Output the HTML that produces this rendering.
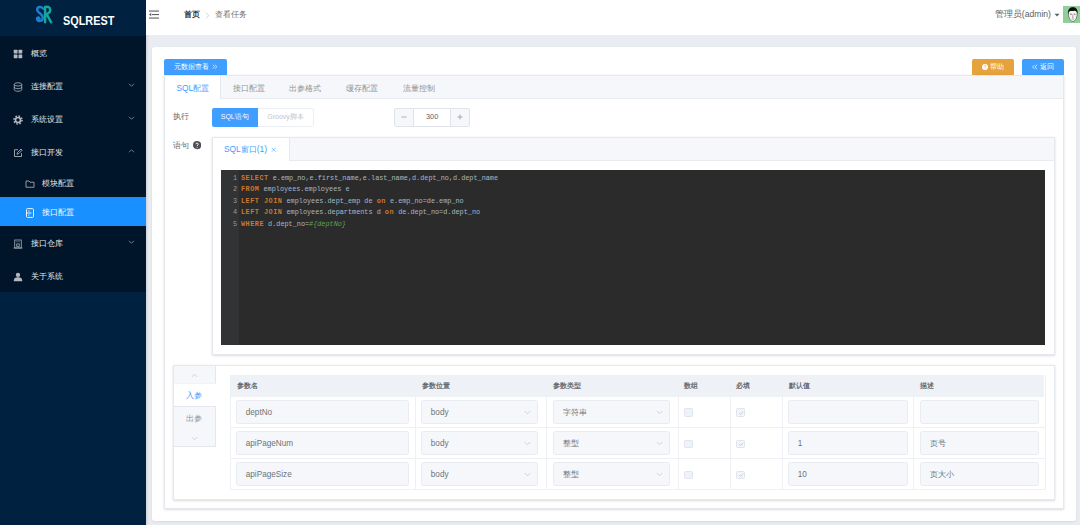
<!DOCTYPE html>
<html lang="zh">
<head>
<meta charset="utf-8">
<title>SQLREST</title>
<style>
*{box-sizing:border-box;margin:0;padding:0}
html,body{width:1080px;height:525px;overflow:hidden;background:#e9ecf0;font-family:"Liberation Sans",sans-serif;}
body{position:relative;font-size:8px;color:#606266}
.abs{position:absolute}
.t{position:absolute;white-space:nowrap;line-height:1}
/* sidebar */
#side{position:absolute;left:0;top:0;width:146px;height:525px;background:#002140;box-shadow:1px 0 2.5px rgba(0,21,41,.14);z-index:5}
#logo{position:absolute;left:0;top:0;width:146px;height:36px;background:#002140}
#menu{position:absolute;left:0;top:36px;width:146px;height:256px;background:#001529}
.mi{position:absolute;left:0;width:146px;height:33px;color:#e6e9ec;font-size:8.2px}
.mi .lbl{position:absolute;left:30.5px;top:50%;margin-top:-3.5px;line-height:9px;white-space:nowrap}
.mi svg.ic{position:absolute;left:12.8px;top:50%;margin-top:-4px;width:10px;height:10px}
.mi svg.ch{position:absolute;left:127.5px;top:50%;margin-top:-3.5px;width:7px;height:6px}
.mi.sub .lbl{left:42px}
.mi.sub svg.ic{left:25px}
.mi.on{background:#1890ff;color:#fff}
/* header */
#head{position:absolute;left:146px;top:0;width:934px;height:35px;background:#fff;z-index:6}
/* card */
#card{position:absolute;left:152px;top:47px;width:924px;height:474px;background:#fff;border-radius:3px;box-shadow:0 1px 2.5px rgba(0,0,0,.08)}
.btn{position:absolute;height:16.5px;border-radius:2px;color:#fff;font-size:7.1px;line-height:17.5px;text-align:center;white-space:nowrap}

/* main content */
.box{position:absolute;background:#fff;border:1px solid #e5e8ed;box-shadow:0 1px 2px 0 rgba(0,0,0,.12),0 0 3px 0 rgba(0,0,0,.04)}
.thead{position:absolute;left:0;top:0;right:0;background:#f5f7fa;border-bottom:1px solid #e8ebf0}
.tab{position:absolute;top:1px;font-size:8.2px;color:#909399;white-space:nowrap;line-height:22px}
.tabon{position:absolute;top:-1px;background:#fff;border:1px solid #e5e8ed;border-bottom:0;color:#409eff}
.ob .tab{margin-top:1px}
.lab{position:absolute;font-size:8px;color:#606266;white-space:nowrap;line-height:10px}
.code{position:absolute;left:221px;top:169.5px;width:824.3px;height:175.5px;background:#2b2b2b;font-family:"Liberation Mono",monospace;font-size:6.84px;color:#a9b7c6;overflow:hidden}
.code .gut{position:absolute;left:0;top:0;width:17.5px;height:100%;background:#313335}
.code .ln{position:absolute;left:0;width:16px;text-align:right;color:#999;line-height:11.5px;height:11.5px}
.code .cl{position:absolute;left:20px;white-space:pre;line-height:11.5px;height:11.5px}
.code b{color:#cc7832;font-weight:bold;letter-spacing:.5px}
.code i{color:#61a151;font-style:italic}

/* params */
.th{position:absolute;top:375px;height:21.75px;line-height:21.75px;font-size:7px;font-weight:bold;color:#666a72;white-space:nowrap}
.inp{position:absolute;height:23.5px;background:#f5f7fa;border:1px solid #e8ebf0;border-radius:2.5px;font-size:8.2px;color:#707378;line-height:23.5px;padding-left:8.5px;white-space:nowrap;overflow:hidden}
.inp svg{position:absolute;right:6px;top:8.5px;width:7px;height:5px}
.hl{position:absolute;left:230.5px;width:814.5px;height:1px;background:#eef0f5}
.vl{position:absolute;top:375px;width:1px;height:114.5px;background:#eef0f5}
.cb{position:absolute;width:8.7px;height:8.7px;border:1px solid #e1e4ea;border-radius:1.5px;background:#edf2fc}
.cb svg{position:absolute;left:0.3px;top:0.3px;width:6.1px;height:6.1px}
</style>
</head>
<body>
<!-- ===== SIDEBAR ===== -->
<div id="side">
  <div id="logo">
    <svg class="abs" style="left:35.4px;top:5.3px;width:18.3px;height:19.2px" viewBox="0 0 38 41">
      <path d="M17 8 C15 3 4 2 4 10 C4 18 17 18 16 28 C15.5 35 6 36 4 31 C2.5 27 8 25 9 29" fill="none" stroke="#1e7fd0" stroke-width="5.2" stroke-linecap="round"/>
      <path d="M21 37 L21 4 C34 1 36 16 24 19 L34 37" fill="none" stroke="#12a89a" stroke-width="5.2" stroke-linejoin="round" stroke-linecap="round"/>
      <path d="M21 28 C23 20 28 17 31 15" fill="none" stroke="#12a89a" stroke-width="2.2" stroke-linecap="round"/>
    </svg>
    <div class="t" style="left:62.5px;top:15.1px;font-size:12px;font-weight:bold;color:#fff;transform-origin:0 0;transform:scaleX(.905)">SQLREST</div>
  </div>
  <div id="menu">
    <div class="mi " style="top:0px;height:33px"><svg class="ic" viewBox="0 0 20 20"><g fill="#b4b9c1"><rect x="1.5" y="1.5" width="7.5" height="7.5" rx="1"/><rect x="11" y="1.5" width="7.5" height="7.5" rx="1"/><rect x="1.5" y="11" width="7.5" height="7.5" rx="1"/><rect x="11" y="11" width="7.5" height="7.5" rx="1"/></g></svg><span class="lbl">概览</span></div>
    <div class="mi " style="top:33px;height:33px"><svg class="ic" viewBox="0 0 20 20"><g fill="none" stroke="#b4b9c1" stroke-width="1.6"><ellipse cx="10" cy="4.8" rx="7.5" ry="3.3"/><path d="M2.5 4.8 V15.2 C2.5 19.6 17.5 19.6 17.5 15.2 V4.8"/><path d="M2.5 10 C2.5 14.4 17.5 14.4 17.5 10"/></g></svg><span class="lbl">连接配置</span><svg class="ch" viewBox="0 0 14 12"><path d="M2 3.5 L7 8.5 L12 3.5" fill="none" stroke="#8b95a3" stroke-width="1.6"/></svg></div>
    <div class="mi " style="top:66px;height:33px"><svg class="ic" viewBox="0 0 20 20"><g fill="none" stroke="#b4b9c1"><circle cx="10" cy="10" r="5" stroke-width="3.2"/><circle cx="10" cy="10" r="8" stroke-width="3" stroke-dasharray="3.2 3.08"/></g></svg><span class="lbl">系统设置</span><svg class="ch" viewBox="0 0 14 12"><path d="M2 3.5 L7 8.5 L12 3.5" fill="none" stroke="#8b95a3" stroke-width="1.6"/></svg></div>
    <div class="mi " style="top:99px;height:33px"><svg class="ic" viewBox="0 0 20 20"><g fill="none" stroke="#b4b9c1" stroke-width="1.7"><path d="M17 10.5 V17 H3 V3.5 H10"/><path d="M8 12.5 L9 9 L16 2 L18.3 4.3 L11.3 11.3 Z"/></g></svg><span class="lbl">接口开发</span><svg class="ch" viewBox="0 0 14 12"><path d="M2 8.5 L7 3.5 L12 8.5" fill="none" stroke="#8b95a3" stroke-width="1.6"/></svg></div>
    <div class="mi sub" style="top:132px;height:29.3px"><svg class="ic" viewBox="0 0 20 20"><path d="M2 4 H8 L10 6.5 H18 V16.5 H2 Z" fill="none" stroke="#b4b9c1" stroke-width="1.6" stroke-linejoin="round"/></svg><span class="lbl">模块配置</span></div>
    <div class="mi sub on" style="top:161.3px;height:28.7px"><svg class="ic" viewBox="0 0 20 20"><g fill="none" stroke="#fff" stroke-width="1.8"><rect x="3" y="1.2" width="14" height="17.6" rx="2"/><path d="M3 10 H13"/><path d="M6.5 6 H9"/><path d="M6.5 14 H9"/></g></svg><span class="lbl">接口配置</span></div>
    <div class="mi " style="top:190px;height:33px"><svg class="ic" viewBox="0 0 20 20"><g fill="none" stroke="#b4b9c1" stroke-width="1.5"><rect x="3.5" y="2" width="13" height="16"/><path d="M1 18 H19"/><rect x="7.5" y="10" width="5" height="5"/><path d="M7 5.5 H9 M11 5.5 H13"/></g></svg><span class="lbl">接口仓库</span><svg class="ch" viewBox="0 0 14 12"><path d="M2 3.5 L7 8.5 L12 3.5" fill="none" stroke="#8b95a3" stroke-width="1.6"/></svg></div>
    <div class="mi " style="top:223px;height:33px"><svg class="ic" viewBox="0 0 20 20"><g fill="#b4b9c1"><circle cx="10" cy="5.8" r="4.3"/><path d="M1.5 18.5 C1.5 12 5 10.5 10 10.5 C15 10.5 18.5 12 18.5 18.5 Z"/></g></svg><span class="lbl">关于系统</span></div>
  </div>
</div>
<!-- ===== HEADER ===== -->
<div id="head">
  <svg class="abs" style="left:3px;top:9.5px;width:10px;height:9px" viewBox="0 0 20 18"><g fill="#5a5e66"><rect x="0" y="1" width="20" height="2.2"/><rect x="6" y="8" width="14" height="2.2"/><rect x="0" y="15" width="20" height="2.2"/><path d="M4.5 5.6 L0 9.1 L4.5 12.6 Z"/></g></svg>
  <div class="t" style="left:37.5px;top:10.5px;font-size:8px;font-weight:bold;color:#303133">首页</div>
  <svg class="abs" style="left:58.9px;top:11.5px;width:5px;height:7px" viewBox="0 0 10 14"><path d="M2.5 1.5 L7.5 7 L2.5 12.5" fill="none" stroke="#c0c4cc" stroke-width="1.5"/></svg>
  <div class="t" style="left:69px;top:10.5px;font-size:8.1px;color:#696d75">查看任务</div>
  <div class="t" style="left:848.8px;top:9.5px;font-size:8.6px;color:#5a5e66">管理员(admin)</div>
  <svg class="abs" style="left:908px;top:12.5px;width:6px;height:4px" viewBox="0 0 12 8"><path d="M1 1.5 H11 L6 7 Z" fill="#5a5e66"/></svg>
  <div class="abs" style="left:917px;top:6px;width:17px;height:17.2px;background:#8fcf9b;overflow:hidden">
    <svg class="abs" style="left:3.6px;top:1px;width:11.6px;height:15.4px" viewBox="0 0 24 32">
      <path d="M3 14 C2 4 8 1 12 1 C17 1 22 4 21 14 C21 24 16 30 12 30 C8 30 3 24 3 14 Z" fill="#f6f3ee" stroke="#222" stroke-width="1"/>
      <path d="M2.5 15 C1 3 8 0.5 12 0.5 C17 0.5 23 3 21.5 15 C20.5 10 19 8 16 8 C12 9 7 8 5.5 9 C4 10.5 3.5 12 2.5 15 Z" fill="#0f0f0f"/>
      <path d="M6.5 15 H10 M14 15 H17.5" stroke="#222" stroke-width="1.3"/>
      <path d="M12 15.5 V21 M10.5 21.5 H13.5 M9.5 25 H14.5" stroke="#555" stroke-width="1" fill="none"/>
    </svg>
  </div>
</div>
<!-- ===== CARD ===== -->
<div id="card"></div>
<!-- top buttons -->
<div class="btn" style="left:164.25px;top:59.25px;width:62.5px;background:#409eff">元数据查看<svg style="width:5.4px;height:5.4px;vertical-align:-0.5px;margin-left:3.2px" viewBox="0 0 12 12"><path d="M1.5 1.5 L6 6 L1.5 10.5 M6.5 1.5 L11 6 L6.5 10.5" fill="none" stroke="#fff" stroke-width="1.4"/></svg></div>
<div class="btn" style="left:971.8px;top:59.25px;width:42.2px;background:#e6a23c"><svg style="width:6px;height:6px;vertical-align:-0.8px;margin-right:2px" viewBox="0 0 12 12"><circle cx="6" cy="6" r="6" fill="#fff"/><path d="M4.2 4.6 C4.2 2.6 7.8 2.6 7.8 4.6 C7.8 5.9 6 5.9 6 7.3" fill="none" stroke="#e6a23c" stroke-width="1.3"/><circle cx="6" cy="9.2" r=".8" fill="#e6a23c"/></svg>帮助</div>
<div class="btn" style="left:1022px;top:59.25px;width:42px;background:#409eff"><svg style="width:6px;height:6px;vertical-align:-0.6px" viewBox="0 0 12 12"><path d="M10.5 1.5 L6 6 L10.5 10.5 M5.5 1.5 L1 6 L5.5 10.5" fill="none" stroke="#fff" stroke-width="1.4"/></svg> 返回</div>

<!-- outer tabs box -->
<div class="box ob" style="left:164px;top:75px;width:900px;height:434px">
  <div class="thead" style="height:23.25px"></div>
  <div class="tabon" style="left:-1px;width:56.5px;height:24.25px"></div>
  <div class="tab" style="left:11.5px;top:0;color:#409eff;font-size:8.4px">SQL配置</div>
  <div class="tab" style="left:67.5px">接口配置</div>
  <div class="tab" style="left:124px">出参格式</div>
  <div class="tab" style="left:180.75px">缓存配置</div>
  <div class="tab" style="left:237.5px">流量控制</div>
</div>

<!-- row: 执行 -->
<div class="lab" style="left:173.3px;top:111.5px">执行</div>
<div class="abs" style="left:211.75px;top:108px;width:46px;height:18.5px;background:#409eff;border-radius:2px 0 0 2px;color:#fff;font-size:6.9px;line-height:18.5px;text-align:center;white-space:nowrap">SQL语句</div>
<div class="abs" style="left:257.75px;top:108px;width:56.5px;height:18.5px;background:#fff;border:1px solid #ebeef5;border-left:0;border-radius:0 2px 2px 0;color:#c0c4cc;font-size:7px;line-height:16.5px;text-align:center;white-space:nowrap">Groovy脚本</div>
<div class="abs" style="left:394.3px;top:108.3px;width:75.7px;height:18.4px;border:1px solid #e0e3e9;border-radius:2px;background:#fff;overflow:hidden">
  <div class="abs" style="left:0;top:0;width:18.5px;height:100%;background:#f5f7fa;border-right:1px solid #e0e3e9"></div>
  <div class="abs" style="right:0;top:0;width:18.5px;height:100%;background:#f5f7fa;border-left:1px solid #e0e3e9"></div>
  <svg class="abs" style="left:6px;top:5px;width:6px;height:6px" viewBox="0 0 12 12"><path d="M1 6 H11" stroke="#70747c" stroke-width="1.1"/></svg>
  <svg class="abs" style="right:6px;top:5px;width:6px;height:6px" viewBox="0 0 12 12"><path d="M1 6 H11 M6 1 V11" stroke="#70747c" stroke-width="1.1"/></svg>
  <div class="abs" style="left:19px;right:19px;top:0;height:16.4px;line-height:16.4px;text-align:center;font-size:7.3px;color:#606266">300</div>
</div>

<!-- row: 语句 -->
<div class="lab" style="left:173.3px;top:140.5px">语句</div>
<svg class="abs" style="left:192.6px;top:141.4px;width:8.2px;height:8.2px" viewBox="0 0 16 16"><circle cx="8" cy="8" r="8" fill="#4d5055"/><path d="M5.6 6.2 C5.6 3.4 10.4 3.4 10.4 6.2 C10.4 7.9 8 7.9 8 9.8" fill="none" stroke="#fff" stroke-width="1.7"/><circle cx="8" cy="12.2" r="1.05" fill="#fff"/></svg>
<div class="box" style="left:211.5px;top:137px;width:843.2px;height:217.7px">
  <div class="thead" style="height:22.75px"></div>
  <div class="tabon" style="left:-1px;width:78.75px;height:23.75px"></div>
  <div class="tab" style="left:11.5px;top:0;color:#409eff;font-size:8.4px;line-height:22.5px">SQL窗口(1)</div>
  <svg class="abs" style="left:58.5px;top:8.5px;width:5.5px;height:5.5px" viewBox="0 0 10 10"><path d="M1.5 1.5 L8.5 8.5 M8.5 1.5 L1.5 8.5" stroke="#409eff" stroke-width="1.1"/></svg>
</div>
<div class="code">
  <div class="gut"></div>
  <div class="ln" style="top:3px">1</div><div class="cl" style="top:3px"><b>SELECT</b> e.emp_no,e.first_name,e.last_name,d.dept_no,d.dept_name</div>
  <div class="ln" style="top:14.5px">2</div><div class="cl" style="top:14.5px"><b>FROM</b> employees.employees e</div>
  <div class="ln" style="top:26px">3</div><div class="cl" style="top:26px"><b>LEFT JOIN</b> employees.dept_emp de <b>on</b> e.emp_no=de.emp_no</div>
  <div class="ln" style="top:37.5px">4</div><div class="cl" style="top:37.5px"><b>LEFT JOIN</b> employees.departments d <b>on</b> de.dept_no=d.dept_no</div>
  <div class="ln" style="top:49px">5</div><div class="cl" style="top:49px"><b>WHERE</b> d.dept_no=<i>#{deptNo}</i></div>
</div>
<!-- params box -->
<div class="box" style="left:173.4px;top:365px;width:882px;height:135px">
  <div class="abs" style="left:0;top:0;width:41.25px;height:81px;background:#f5f7fa;border-right:1px solid #e4e7ed;border-bottom:1px solid #e4e7ed"></div>
  <div class="abs" style="left:0;top:17.25px;width:41.25px;height:23.5px;background:#fff;border-bottom:1px solid #e4e7ed;border-top:1px solid #f0f2f5"></div>
  <svg class="abs" style="left:17px;top:7px;width:7px;height:5px" viewBox="0 0 14 10"><path d="M1.5 8 L7 2.5 L12.5 8" fill="none" stroke="#c0c4cc" stroke-width="1.4"/></svg>
  <svg class="abs" style="left:17px;top:70px;width:7px;height:5px" viewBox="0 0 14 10"><path d="M1.5 2 L7 7.5 L12.5 2" fill="none" stroke="#c0c4cc" stroke-width="1.4"/></svg>
  <div class="t" style="left:12px;top:26px;font-size:8.2px;color:#409eff">入参</div>
  <div class="t" style="left:12px;top:49px;font-size:8.2px;color:#909399">出参</div>
</div>
<div class="abs" style="left:230.5px;top:375px;width:813.8px;height:21.75px;background:#eef1f6"></div>
<div class="th" style="left:236.5px">参数名</div>
<div class="th" style="left:421.5px">参数位置</div>
<div class="th" style="left:552.7px">参数类型</div>
<div class="th" style="left:684px">数组</div>
<div class="th" style="left:736.3px">必填</div>
<div class="th" style="left:788.7px">默认值</div>
<div class="th" style="left:920px">描述</div>
<div class="hl" style="top:427.25px"></div><div class="hl" style="top:458.25px"></div><div class="hl" style="top:489.25px"></div>
<div class="vl" style="left:230.25px"></div><div class="vl" style="left:415.25px"></div><div class="vl" style="left:546px"></div><div class="vl" style="left:677.7px"></div><div class="vl" style="left:730px"></div><div class="vl" style="left:782.3px"></div><div class="vl" style="left:913.3px"></div><div class="vl" style="left:1044.5px"></div>
<div class="inp" style="left:236.25px;top:400px;width:173px">deptNo</div>
<div class="inp" style="left:421.3px;top:400px;width:117.2px">body<svg viewBox="0 0 14 10"><path d="M1.5 2 L7 7.5 L12.5 2" fill="none" stroke="#c0c4cc" stroke-width="1.4"/></svg></div>
<div class="inp" style="left:553px;top:400px;width:117px">字符串<svg viewBox="0 0 14 10"><path d="M1.5 2 L7 7.5 L12.5 2" fill="none" stroke="#c0c4cc" stroke-width="1.4"/></svg></div>
<div class="cb" style="left:684px;top:408.3px"></div>
<div class="cb" style="left:736.3px;top:408.3px;background:#f2f6fc"><svg viewBox="0 0 10 10"><path d="M2 5.2 L4.2 7.4 L8.2 2.8" fill="none" stroke="#c0c4cc" stroke-width="1.3"/></svg></div>
<div class="inp" style="left:788.3px;top:400px;width:119.4px"></div>
<div class="inp" style="left:920px;top:400px;width:118.7px"></div>
<div class="inp" style="left:236.25px;top:431.25px;width:173px">apiPageNum</div>
<div class="inp" style="left:421.3px;top:431.25px;width:117.2px">body<svg viewBox="0 0 14 10"><path d="M1.5 2 L7 7.5 L12.5 2" fill="none" stroke="#c0c4cc" stroke-width="1.4"/></svg></div>
<div class="inp" style="left:553px;top:431.25px;width:117px">整型<svg viewBox="0 0 14 10"><path d="M1.5 2 L7 7.5 L12.5 2" fill="none" stroke="#c0c4cc" stroke-width="1.4"/></svg></div>
<div class="cb" style="left:684px;top:439.55px"></div>
<div class="cb" style="left:736.3px;top:439.55px;background:#f2f6fc"><svg viewBox="0 0 10 10"><path d="M2 5.2 L4.2 7.4 L8.2 2.8" fill="none" stroke="#c0c4cc" stroke-width="1.3"/></svg></div>
<div class="inp" style="left:788.3px;top:431.25px;width:119.4px">1</div>
<div class="inp" style="left:920px;top:431.25px;width:118.7px">页号</div>
<div class="inp" style="left:236.25px;top:462.25px;width:173px">apiPageSize</div>
<div class="inp" style="left:421.3px;top:462.25px;width:117.2px">body<svg viewBox="0 0 14 10"><path d="M1.5 2 L7 7.5 L12.5 2" fill="none" stroke="#c0c4cc" stroke-width="1.4"/></svg></div>
<div class="inp" style="left:553px;top:462.25px;width:117px">整型<svg viewBox="0 0 14 10"><path d="M1.5 2 L7 7.5 L12.5 2" fill="none" stroke="#c0c4cc" stroke-width="1.4"/></svg></div>
<div class="cb" style="left:684px;top:470.55px"></div>
<div class="cb" style="left:736.3px;top:470.55px;background:#f2f6fc"><svg viewBox="0 0 10 10"><path d="M2 5.2 L4.2 7.4 L8.2 2.8" fill="none" stroke="#c0c4cc" stroke-width="1.3"/></svg></div>
<div class="inp" style="left:788.3px;top:462.25px;width:119.4px">10</div>
<div class="inp" style="left:920px;top:462.25px;width:118.7px">页大小</div>

</body>
</html>
